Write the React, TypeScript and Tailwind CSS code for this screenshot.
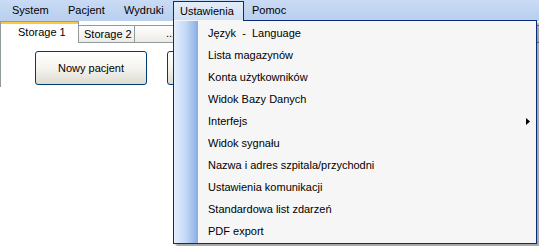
import React from "react";

const items = [
  "Język  -  Language",
  "Lista magazynów",
  "Konta użytkowników",
  "Widok Bazy Danych",
  "Interfejs",
  "Widok sygnału",
  "Nazwa i adres szpitala/przychodni",
  "Ustawienia komunikacji",
  "Standardowa list zdarzeń",
  "PDF export",
];

export default function App() {
  return (
    <div className="relative w-[539px] h-[246px] overflow-hidden bg-white font-['Liberation_Sans',Arial,sans-serif] text-[11px] text-black">
      {/* Menu bar */}
      <div className="flex h-[21px] bg-gradient-to-b from-[#c9dbf5] to-[#b8cfee] pl-[5px]">
        <div className="w-[56px] pl-[7px] leading-[21px]">System</div>
        <div className="w-[56px] pl-[7px] leading-[21px]">Pacjent</div>
        <div className="w-[56px] pl-[7px] leading-[21px]">Wydruki</div>
        <div className="mt-[1px] h-[20px] w-[71px] border-l border-r border-t border-[#0a2a7a] bg-gradient-to-b from-[#e4edf9] to-[#cfdff5] pl-[6px] leading-[19px]">
          Ustawienia
        </div>
        <div className="w-[46px] pl-[8px] leading-[21px]">Pomoc</div>
      </div>

      {/* Tabs */}
      <div className="flex h-[22px] items-end">
        <div className="relative h-[22px] w-[79px] border-l border-r border-[#919b9c] bg-white">
          <div className="h-[1px] bg-[#e68b2c]" />
          <div className="h-[2px] bg-[#ffc73c]" />
          <div className="pl-[17px] leading-[17px]">Storage 1</div>
        </div>
        <div className="h-[18px] w-[56px] border-t border-r border-b border-[#919b9c] bg-gradient-to-b from-white to-[#ecebe6] pl-[5px] leading-[17px]">
          Storage 2
        </div>
        <div className="h-[18px] flex-1 border-t border-b border-[#919b9c] bg-gradient-to-b from-white to-[#ecebe6] pl-[31px] leading-[15px]">
          ...
        </div>
      </div>

      {/* Tab page */}
      <div className="flex h-[44px] gap-[20px] border-l border-[#919b9c] pl-[34px] pt-[8px]">
        <div className="flex h-[34px] w-[112px] items-center justify-center rounded-[3px] border border-[#003c74] bg-gradient-to-b from-white via-[#f5f4ef] to-[#dedbd1]">
          Nowy pacjent
        </div>
        <div className="h-[34px] w-[112px] rounded-[3px] border border-[#003c74] bg-gradient-to-b from-white via-[#f5f4ef] to-[#dedbd1]" />
      </div>

      {/* Dropdown */}
      <div className="absolute left-[173px] top-[20px] w-[364px] border-l border-r border-b border-[#0a2a7a] bg-[#f6f6f6] shadow-[3px_3px_2px_rgba(0,0,0,0.35)]">
        <div className="flex h-[1px]">
          <div className="w-[69px]" />
          <div className="flex-1 bg-[#0a2a7a]" />
        </div>
        <div className="flex">
          <div className="w-[24px] bg-gradient-to-r from-[#e3efff] via-[#c3d8f6] to-[#87ade4]" />
          <div className="flex-1 pt-[1px] pb-[1px]">
            {items.map((t) => (
              <div key={t} className="flex h-[22px] items-center justify-between pl-[10px] pr-[6px] whitespace-pre">
                <span>{t}</span>
                {t === "Interfejs" && (
                  <svg width="4" height="7" viewBox="0 0 4 7">
                    <path d="M0 0 L4 3.5 L0 7 Z" fill="#000" />
                  </svg>
                )}
              </div>
            ))}
          </div>
        </div>
      </div>
    </div>
  );
}
